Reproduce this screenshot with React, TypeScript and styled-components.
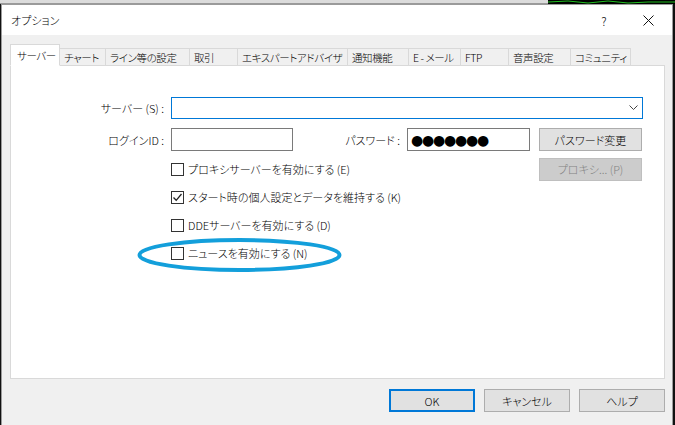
import React from 'react'
import styled, { createGlobalStyle } from 'styled-components'

const GlobalStyle = createGlobalStyle`
  html, body {
    margin: 0;
    padding: 0;
    background: #1b1b1b;
  }
  body {
    font-family: "Noto Sans CJK JP", "Noto Sans", sans-serif;
    font-size: 11px;
    font-weight: 300;
    color: #000;
    font-feature-settings: "palt";
  }
`

const Desktop = styled.div`
  width: 675px;
  height: 425px;
  overflow: hidden;
  display: flex;
  flex-direction: column;
  background: #111;
`

const BackStrip = styled.div`
  height: 4px;
  display: flex;
  flex-shrink: 0;
`

const BackTable = styled.div`
  width: 548px;
  background: #dcdcdc;
  border-bottom: 1px solid #9a9a9a;
`

const BackChart = styled.div`
  flex: 1;
  background: #000;
  display: flex;
`

const Dialog = styled.div`
  margin-left: 1px;
  width: 672px;
  flex: 1;
  border: 1px solid #9b9b9b;
  border-bottom: none;
  box-sizing: border-box;
  background: #f0f0f0;
  display: flex;
  flex-direction: column;
`

const TitleBar = styled.div`
  height: 30px;
  background: #fff;
  display: flex;
  align-items: center;
  padding-left: 9px;
  flex-shrink: 0;
`

const TitleText = styled.div`
  flex: 1;
`

const TitleButton = styled.div<{ w: number }>`
  width: ${(p) => p.w}px;
  height: 30px;
  display: flex;
  align-items: center;
  justify-content: center;
  font-size: 12px;
  color: #111;
`

const Body = styled.div`
  padding: 9px 7px 0 8px;
  display: flex;
  flex-direction: column;
`

const TabRow = styled.div`
  display: flex;
  align-items: flex-end;
  height: 21px;
  position: relative;
  z-index: 1;
`

const Tab = styled.div<{ w: number; active?: boolean }>`
  min-width: ${(p) => p.w}px;
  height: ${(p) => (p.active ? 22 : 17)}px;
  box-sizing: border-box;
  border: 1px solid #d9d9d9;
  border-left: ${(p) => (p.active ? '1px solid #d9d9d9' : 'none')};
  border-bottom: ${(p) => (p.active ? '1px solid #fff' : 'none')};
  background: ${(p) => (p.active ? '#fff' : '#f0f0f0')};
  margin-bottom: ${(p) => (p.active ? -1 : 0)}px;
  padding: 0 3px 0 ${(p) => (p.active ? 6 : 4)}px;
  padding-top: ${(p) => (p.active ? 1 : 0)}px;
  display: flex;
  align-items: center;
  white-space: nowrap;
  font-size: 10.5px;
  letter-spacing: -0.4px;
  &:nth-child(2) {
    border-left: none;
  }
`

const Panel = styled.div`
  width: 655px;
  height: 314px;
  box-sizing: border-box;
  border: 1px solid #d9d9d9;
  background: #fff;
  padding-top: 31px;
`

const Form = styled.div`
  width: 632px;
  display: flex;
  flex-direction: column;
`

const Row = styled.div<{ gap?: number; h?: number }>`
  display: flex;
  align-items: center;
  height: ${(p) => p.h ?? 24}px;
  margin-top: ${(p) => p.gap ?? 0}px;
  position: relative;
`

const FieldLabel = styled.div<{ w: number }>`
  width: ${(p) => p.w}px;
  text-align: right;
  padding-right: 7px;
  box-sizing: border-box;
  white-space: nowrap;
`

const Combo = styled.div`
  width: 472px;
  height: 22px;
  box-sizing: border-box;
  border: 1px solid #0078d7;
  background: #fff;
  display: flex;
  align-items: center;
  justify-content: flex-end;
  padding-right: 4px;
`

const TextBox = styled.div<{ w: number }>`
  width: ${(p) => p.w}px;
  height: 23px;
  box-sizing: border-box;
  border: 1px solid #7a7a7a;
  background: #fff;
  display: flex;
  align-items: center;
  padding-left: 3px;
  font-family: "DejaVu Sans", sans-serif;
  font-weight: 400;
  font-size: 14px;
  letter-spacing: -1.2px;
`

const Button = styled.div<{ w: number; primary?: boolean; disabled?: boolean }>`
  width: ${(p) => p.w}px;
  height: 23px;
  box-sizing: border-box;
  border: ${(p) =>
    p.primary ? '2px solid #0078d7' : p.disabled ? '1px solid #bfbfbf' : '1px solid #adadad'};
  background: ${(p) => (p.disabled ? '#cccccc' : '#e1e1e1')};
  color: ${(p) => (p.disabled ? '#838383' : '#000')};
  display: flex;
  align-items: center;
  justify-content: center;
  white-space: nowrap;
`

const Check = styled.div`
  display: flex;
  align-items: center;
  gap: 4px;
  position: relative;
  white-space: nowrap;
`

const Box = styled.div`
  width: 13px;
  height: 13px;
  box-sizing: border-box;
  border: 1px solid #333;
  background: #fff;
  display: flex;
  align-items: center;
  justify-content: center;
`

const Circle = styled.svg`
  position: absolute;
  left: -35px;
  top: -8px;
  pointer-events: none;
`

const Footer = styled.div`
  display: flex;
  justify-content: flex-end;
  gap: 9px;
  width: 655px;
  margin-top: 10px;
`

const tabs = [
  { t: 'サーバー', w: 50 },
  { t: 'チャート', w: 46 },
  { t: 'ライン等の設定', w: 84 },
  { t: '取引', w: 48 },
  { t: 'エキスパートアドバイザ', w: 110 },
  { t: '通知機能', w: 61 },
  { t: 'E - メール', w: 52 },
  { t: 'FTP', w: 48 },
  { t: '音声設定', w: 62 },
  { t: 'コミュニティ', w: 59 },
]

const CheckItem = ({ label, checked, marked }: { label: string; checked?: boolean; marked?: boolean }) => (
  <Check>
    <Box>
      {checked && (
        <svg width="11" height="11" viewBox="0 0 11 11">
          <path d="M1.5 5.5 L4.2 8.3 L9.5 2" fill="none" stroke="#222" strokeWidth="1.3" />
        </svg>
      )}
    </Box>
    <span>{label}</span>
    {marked && (
      <Circle width="207" height="36" viewBox="0 0 207 36">
        <ellipse cx="103.5" cy="18" rx="100" ry="15" fill="none" stroke="#139fdb" strokeWidth="4" />
      </Circle>
    )}
  </Check>
)

export default function App() {
  return (
    <Desktop>
      <GlobalStyle />
      <BackStrip>
        <BackTable />
        <BackChart>
          <svg width="127" height="4" viewBox="0 0 127 4">
            <polyline points="0,2 20,1 40,3 60,1 80,3 100,2 127,2" fill="none" stroke="#22c022" strokeWidth="1" />
          </svg>
        </BackChart>
      </BackStrip>
      <Dialog>
        <TitleBar>
          <TitleText>オプション</TitleText>
          <TitleButton w={40}>?</TitleButton>
          <TitleButton w={48}>
            <svg width="11" height="11" viewBox="0 0 11 11">
              <path d="M0.5 0.5 L10.5 10.5 M10.5 0.5 L0.5 10.5" stroke="#111" strokeWidth="1" />
            </svg>
          </TitleButton>
        </TitleBar>
        <Body>
          <TabRow>
            {tabs.map((tab, i) => (
              <Tab key={tab.t} w={tab.w} active={i === 0}>
                {tab.t}
              </Tab>
            ))}
          </TabRow>
          <Panel>
            <Form>
              <Row h={22}>
                <FieldLabel w={160}>サーバー (S) :</FieldLabel>
                <Combo>
                  <svg width="9" height="6" viewBox="0 0 9 6">
                    <path d="M0.5 0.5 L4.5 4.5 L8.5 0.5" fill="none" stroke="#444" strokeWidth="1" />
                  </svg>
                </Combo>
              </Row>
              <Row h={23} gap={9}>
                <FieldLabel w={160}>ログインID :</FieldLabel>
                <TextBox w={122} />
                <FieldLabel w={114}>パスワード :</FieldLabel>
                <TextBox w={123}>●●●●●●●</TextBox>
                <div style={{ width: 9 }} />
                <Button w={103}>パスワード変更</Button>
              </Row>
              <Row gap={6}>
                <FieldLabel w={160} />
                <CheckItem label="プロキシサーバーを有効にする (E)" />
                <div style={{ flex: 1 }} />
                <Button w={103} disabled>
                  プロキシ... (P)
                </Button>
                <div style={{ width: 1 }} />
              </Row>
              <Row gap={4}>
                <FieldLabel w={160} />
                <CheckItem label="スタート時の個人設定とデータを維持する (K)" checked />
              </Row>
              <Row gap={4}>
                <FieldLabel w={160} />
                <CheckItem label="DDEサーバーを有効にする (D)" />
              </Row>
              <Row gap={4}>
                <FieldLabel w={160} />
                <CheckItem label="ニュースを有効にする (N)" marked />
              </Row>
            </Form>
          </Panel>
          <Footer>
            <Button w={86} primary>
              OK
            </Button>
            <Button w={86}>キャンセル</Button>
            <Button w={86}>ヘルプ</Button>
          </Footer>
        </Body>
      </Dialog>
    </Desktop>
  )
}
